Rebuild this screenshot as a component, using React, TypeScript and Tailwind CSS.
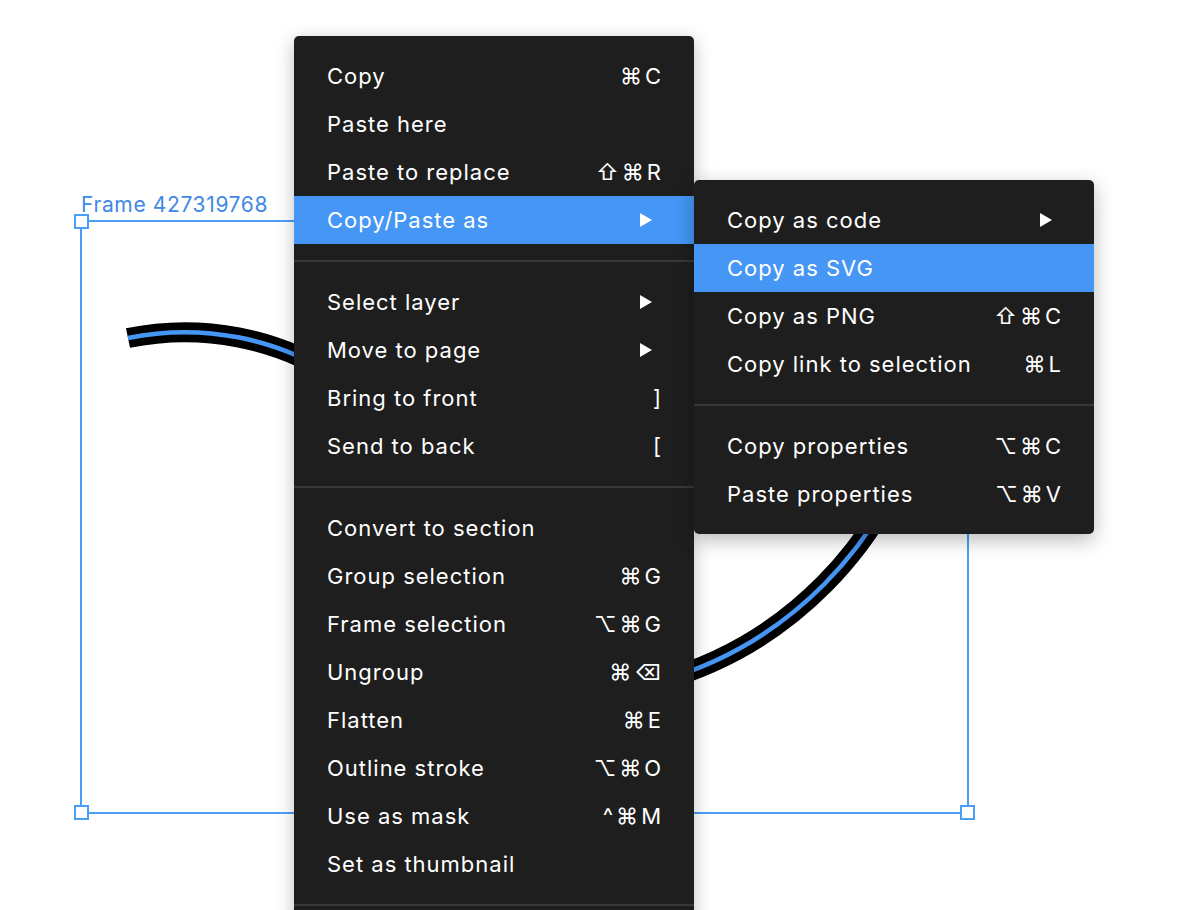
import React from 'react'

type Item = {
  label: string
  keys?: string[]
  sub?: boolean
  active?: boolean
}

const mainGroups: Item[][] = [
  [
    { label: 'Copy', keys: ['⌘', 'C'] },
    { label: 'Paste here' },
    { label: 'Paste to replace', keys: ['⇧', '⌘', 'R'] },
    { label: 'Copy/Paste as', sub: true, active: true },
  ],
  [
    { label: 'Select layer', sub: true },
    { label: 'Move to page', sub: true },
    { label: 'Bring to front', keys: [']'] },
    { label: 'Send to back', keys: ['['] },
  ],
  [
    { label: 'Convert to section' },
    { label: 'Group selection', keys: ['⌘', 'G'] },
    { label: 'Frame selection', keys: ['⌥', '⌘', 'G'] },
    { label: 'Ungroup', keys: ['⌘', '⌫'] },
    { label: 'Flatten', keys: ['⌘', 'E'] },
    { label: 'Outline stroke', keys: ['⌥', '⌘', 'O'] },
    { label: 'Use as mask', keys: ['^', '⌘', 'M'] },
    { label: 'Set as thumbnail' },
  ],
]

const subGroups: Item[][] = [
  [
    { label: 'Copy as code', sub: true },
    { label: 'Copy as SVG', active: true },
    { label: 'Copy as PNG', keys: ['⇧', '⌘', 'C'] },
    { label: 'Copy link to selection', keys: ['⌘', 'L'] },
  ],
  [
    { label: 'Copy properties', keys: ['⌥', '⌘', 'C'] },
    { label: 'Paste properties', keys: ['⌥', '⌘', 'V'] },
  ],
]

function Arrow() {
  return (
    <svg width="12" height="14" viewBox="0 0 12 14" className="mr-[9px]">
      <path d="M0 0 L12 7 L0 14 Z" fill="#ffffff" />
    </svg>
  )
}

function Row({ item }: { item: Item }) {
  return (
    <div
      className={
        'h-12 flex items-center justify-between px-[33px] ' +
        (item.active ? 'bg-[#4596f5]' : '')
      }
    >
      <span>{item.label}</span>
      {item.sub && <Arrow />}
      {item.keys && (
        <span className="flex items-center gap-[3px] tracking-normal">
          {item.keys.map((k, i) => (
            <span key={i}>{k}</span>
          ))}
        </span>
      )}
    </div>
  )
}

function Menu({ groups, className, more }: { groups: Item[][]; className: string; more?: boolean }) {
  return (
    <div className={className}>
      {groups.map((group, gi) => (
        <div key={gi}>
          {gi > 0 && <div className="h-[2px] bg-[#383838] my-4" />}
          {group.map(item => (
            <Row key={item.label} item={item} />
          ))}
        </div>
      ))}
      {/* menu continues below the fold */}
      {more && <div className="h-[2px] bg-[#383838] mt-4 mb-12" />}
    </div>
  )
}

export default function App() {
  return (
    <div className="relative w-[1200px] h-[910px] bg-white overflow-hidden font-['Inter','DejaVu_Sans',sans-serif]">

      {/* Canvas: selected frame */}
      <div className="absolute left-[81px] top-[193px] text-[21px] leading-[24px] text-[#3f88e6] tracking-[0.03em]">
        Frame 427319768
      </div>
      <div className="absolute left-[80px] top-[220px] w-[889px] h-[594px] border-2 border-[#4a9ff5]" />

      <svg className="absolute left-0 top-0" width="1200" height="910">
        <path d="M128 338 A 281 281 0 0 1 340 379" fill="none" stroke="#000" strokeWidth="20" />
        <path d="M128 338 A 281 281 0 0 1 340 379" fill="none" stroke="#4596f5" strokeWidth="4.5" />
        <path d="M920 418 A 375 375 0 0 1 660 681" fill="none" stroke="#000" strokeWidth="20" />
        <path d="M920 418 A 375 375 0 0 1 660 681" fill="none" stroke="#4596f5" strokeWidth="4.5" />
      </svg>

      <div className="absolute left-[74px] top-[214px] w-[15px] h-[15px] bg-white border-2 border-[#4a9ff5]" />
      <div className="absolute left-[74px] top-[805px] w-[15px] h-[15px] bg-white border-2 border-[#4a9ff5]" />
      <div className="absolute left-[960px] top-[805px] w-[15px] h-[15px] bg-white border-2 border-[#4a9ff5]" />

      {/* Context menu */}
      <Menu
        more
        groups={mainGroups}
        className="absolute left-[294px] top-[36px] w-[400px] pt-4 bg-[#1e1e1e] rounded-t-[5px] text-white text-[22px] tracking-[0.045em] shadow-[0_4px_18px_rgba(0,0,0,0.25)]"
      />

      {/* Submenu */}
      <Menu
        groups={subGroups}
        className="absolute left-[694px] top-[180px] w-[400px] py-4 bg-[#1e1e1e] rounded-[5px] text-white text-[22px] tracking-[0.045em] shadow-[0_6px_20px_rgba(0,0,0,0.28)]"
      />
    </div>
  )
}
